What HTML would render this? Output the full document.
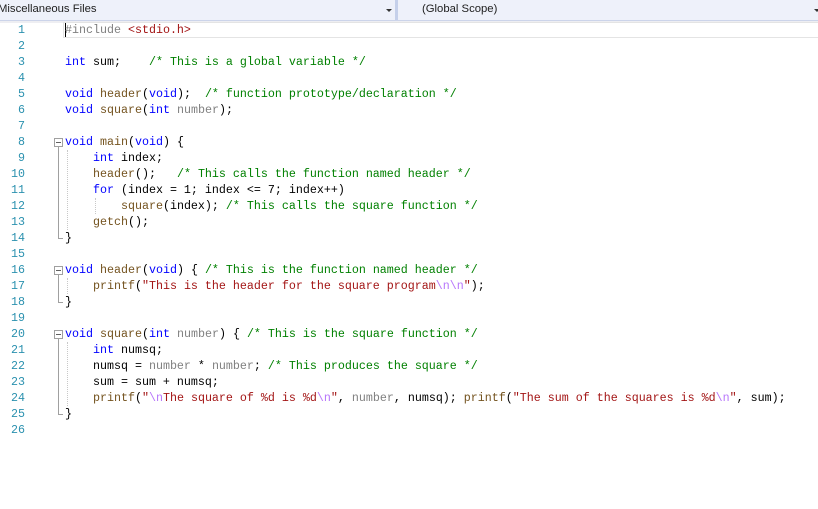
<!DOCTYPE html><html><head><style>
body{margin:0;width:818px;height:509px;background:#fff;overflow:hidden;position:relative;font-family:"Liberation Sans",sans-serif}
.hdr{position:absolute;left:0;top:0;width:818px;height:20px;background:#eef1fa;border-bottom:1px solid #ccd4ea;font-size:11.3px;color:#1e1e1e}
.strip{position:absolute;left:0;top:21px;width:818px;height:2px;background:#eeeef2}
.ln{position:absolute;left:0;width:25px;text-align:right;font:11.67px/16px "Liberation Mono",monospace;color:#2b91af}
.c{position:absolute;left:65px;white-space:pre;font:11.67px/16px "Liberation Mono",monospace;color:#000}
.k{color:#0000ff}.f{color:#74531f}.m{color:#008000}.s{color:#a31515}.p{color:#808080}.e{color:#b776fb}.g{color:#808080}
.box{position:absolute;left:54px;width:7px;height:7px;border:1px solid #a0a0a0;background:#fff}
.box:after{content:"";position:absolute;left:1px;top:3px;width:5px;height:1px;background:#606060}
.vl{position:absolute;left:58px;width:1px;background:#a0a0a0}
.dl{position:absolute;width:0;border-left:1px dotted #c8c8c8}
.arr{position:absolute;top:9px;width:0;height:0;border-left:3px solid transparent;border-right:3px solid transparent;border-top:3px solid #333}
</style></head><body>
<div class="hdr"><span style="position:absolute;left:-2px;top:3px">Miscellaneous Files</span>
<div class="arr" style="left:386px"></div>
<div style="position:absolute;left:395px;top:0;width:3px;height:20px;background:#c5d0ea"></div>
<span style="position:absolute;left:422px;top:3px">(Global Scope)</span>
<div class="arr" style="left:814px"></div></div>
<div class="strip"></div>
<div style="position:absolute;left:63px;top:22px;width:760px;height:14px;border:1px solid #e4e4e4"></div>
<div style="position:absolute;left:65px;top:23px;width:1px;height:14px;background:#000"></div>

<div class="ln" style="top:22px">1</div><div class="ln" style="top:38px">2</div><div class="ln" style="top:54px">3</div><div class="ln" style="top:70px">4</div><div class="ln" style="top:86px">5</div><div class="ln" style="top:102px">6</div><div class="ln" style="top:118px">7</div><div class="ln" style="top:134px">8</div><div class="ln" style="top:150px">9</div><div class="ln" style="top:166px">10</div><div class="ln" style="top:182px">11</div><div class="ln" style="top:198px">12</div><div class="ln" style="top:214px">13</div><div class="ln" style="top:230px">14</div><div class="ln" style="top:246px">15</div><div class="ln" style="top:262px">16</div><div class="ln" style="top:278px">17</div><div class="ln" style="top:294px">18</div><div class="ln" style="top:310px">19</div><div class="ln" style="top:326px">20</div><div class="ln" style="top:342px">21</div><div class="ln" style="top:358px">22</div><div class="ln" style="top:374px">23</div><div class="ln" style="top:390px">24</div><div class="ln" style="top:406px">25</div><div class="ln" style="top:422px">26</div>

<div class="box" style="top:138px"></div><div class="vl" style="top:147px;height:92px"></div><div style="position:absolute;left:58px;top:238px;width:5px;height:1px;background:#a0a0a0"></div>
<div class="box" style="top:266px"></div><div class="vl" style="top:275px;height:28px"></div><div style="position:absolute;left:58px;top:302px;width:5px;height:1px;background:#a0a0a0"></div>
<div class="box" style="top:330px"></div><div class="vl" style="top:339px;height:76px"></div><div style="position:absolute;left:58px;top:414px;width:5px;height:1px;background:#a0a0a0"></div>
<div class="dl" style="left:67px;top:150px;height:80px"></div>
<div class="dl" style="left:95px;top:198px;height:16px"></div>
<div class="dl" style="left:67px;top:278px;height:16px"></div>
<div class="dl" style="left:67px;top:342px;height:64px"></div>

<div class="c" style="top:22px"><span class="g">#include</span> <span class="s">&lt;stdio.h&gt;</span></div>
<div class="c" style="top:54px"><span class="k">int</span> sum;    <span class="m">/* This is a global variable */</span></div>
<div class="c" style="top:86px"><span class="k">void</span> <span class="f">header</span>(<span class="k">void</span>);  <span class="m">/* function prototype/declaration */</span></div>
<div class="c" style="top:102px"><span class="k">void</span> <span class="f">square</span>(<span class="k">int</span> <span class="p">number</span>);</div>
<div class="c" style="top:134px"><span class="k">void</span> <span class="f">main</span>(<span class="k">void</span>) {</div>
<div class="c" style="top:150px">    <span class="k">int</span> index;</div>
<div class="c" style="top:166px">    <span class="f">header</span>();   <span class="m">/* This calls the function named header */</span></div>
<div class="c" style="top:182px">    <span class="k">for</span> (index = 1; index &lt;= 7; index++)</div>
<div class="c" style="top:198px">        <span class="f">square</span>(index); <span class="m">/* This calls the square function */</span></div>
<div class="c" style="top:214px">    <span class="f">getch</span>();</div>
<div class="c" style="top:230px">}</div>
<div class="c" style="top:262px"><span class="k">void</span> <span class="f">header</span>(<span class="k">void</span>) { <span class="m">/* This is the function named header */</span></div>
<div class="c" style="top:278px">    <span class="f">printf</span>(<span class="s">"This is the header for the square program<span class="e">\n\n</span>"</span>);</div>
<div class="c" style="top:294px">}</div>
<div class="c" style="top:326px"><span class="k">void</span> <span class="f">square</span>(<span class="k">int</span> <span class="p">number</span>) { <span class="m">/* This is the square function */</span></div>
<div class="c" style="top:342px">    <span class="k">int</span> numsq;</div>
<div class="c" style="top:358px">    numsq = <span class="p">number</span> * <span class="p">number</span>; <span class="m">/* This produces the square */</span></div>
<div class="c" style="top:374px">    sum = sum + numsq;</div>
<div class="c" style="top:390px">    <span class="f">printf</span>(<span class="s">"<span class="e">\n</span>The square of %d is %d<span class="e">\n</span>"</span>, <span class="p">number</span>, numsq); <span class="f">printf</span>(<span class="s">"The sum of the squares is %d<span class="e">\n</span>"</span>, sum);</div>
<div class="c" style="top:406px">}</div>
</body></html>
